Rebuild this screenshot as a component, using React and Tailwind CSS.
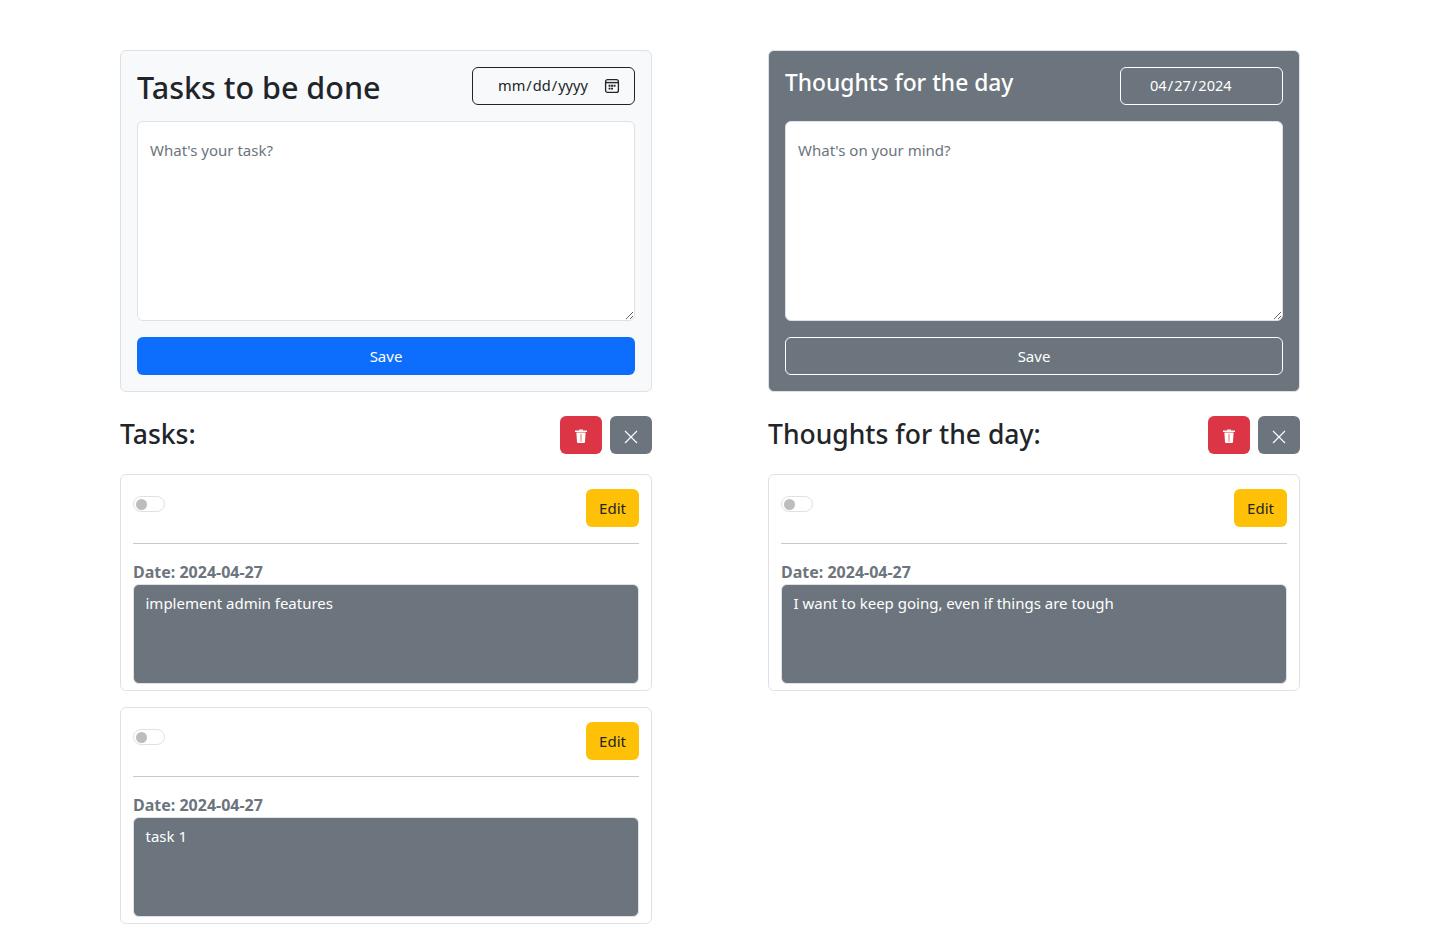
import React from "react";

function TrashIcon() {
  return (
    <svg width="14" height="16" viewBox="0 0 14 16" className="mt-[2px]" aria-hidden="true">
      <path d="M5 1.5 h4 v1.2 h-4 z" fill="#fff" />
      <rect x="1" y="2.4" width="12" height="1.6" rx="0.5" fill="#fff" />
      <path fillRule="evenodd" d="M2.4 4.4 h9.2 l-.6 9.6 a1 1 0 0 1 -1 .9 h-6 a1 1 0 0 1 -1 -.9 z M6 6 v7.2 h2 v-7.2 z" fill="#fff" />
      <rect x="6" y="6" width="2" height="7.2" fill="#f3b7a6" />
    </svg>
  );
}

function CloseIcon() {
  return (
    <svg width="14" height="14" viewBox="0 0 14 14" className="mt-[4px]" aria-hidden="true">
      <path d="M1 1 L13 13 M13 1 L1 13" stroke="#fff" strokeWidth="1.1" fill="none" />
    </svg>
  );
}

function CalendarIcon() {
  return (
    <svg width="16" height="16" viewBox="0 0 16 16" aria-hidden="true">
      <rect x="1.6" y="1.6" width="12.8" height="12.8" rx="2" fill="none" stroke="#212529" strokeWidth="1.3" />
      <path d="M1.6 4.6 H14.4" stroke="#212529" strokeWidth="1.4" />
      <path d="M4.6 6.8h1.9v1.9H4.6zM7.1 6.8H9v1.9H7.1zM9.6 6.8h1.9v1.9H9.6zM4.6 9.7h1.9v1.9H4.6zM7.1 9.7H9v1.9H7.1z" fill="#212529" />
    </svg>
  );
}

function Entry({ text, last }) {
  return (
    <div className={`rounded-md border border-[#dee2e6] bg-white px-3 pb-[6px] pt-[14px] ${last ? "" : "mb-4"}`}>
      <div className="flex items-start justify-between">
        <div className="mt-[7px] flex h-4 w-8 items-center rounded-full border border-[#dfe1e4] pl-[2px]">
          <div className="h-[11px] w-[11px] rounded-full bg-[#bdbdbd]" />
        </div>
        <button className="h-[38px] w-[53px] rounded-md bg-[#ffc107] text-[15px] text-[#212529]">Edit</button>
      </div>
      <hr className="mt-4 border-t border-[#c8c8c8]" />
      <div className="mt-[17px] h-[23px] text-base leading-[22px] font-bold text-[#6c757d]">Date: 2024-04-27</div>
      <div className="h-[100px] rounded-md border border-[#dee2e6] bg-[#6c757d] px-[11.5px] py-[6px] text-[15px] leading-6 text-white">{text}</div>
    </div>
  );
}

function Header({ title }) {
  return (
    <div className="mt-6 mb-5 flex h-[38px] items-center justify-between">
      <h2 className="mt-[-2px] text-[26.5px] leading-[38px] font-medium text-[#212529]">{title}</h2>
      <div className="flex gap-2">
        <button className="flex h-[38px] w-[42px] items-center justify-center rounded-md bg-[#dc3545]"><TrashIcon /></button>
        <button className="flex h-[38px] w-[42px] items-center justify-center rounded-md bg-[#6c757d]"><CloseIcon /></button>
      </div>
    </div>
  );
}

const areaClass = "block h-[200px] w-full rounded-md border border-[#dee2e6] bg-white px-3 py-4 text-[15px] leading-6 text-[#212529] placeholder:text-[#6c757d] outline-none";

export default function App() {
  return (
    <div className="min-h-[944px] bg-white pt-[50px] font-['Noto_Sans','Open_Sans',sans-serif]">
      <div className="mx-[120px] grid w-[1180px] grid-cols-[532px_532px] gap-x-[116px]">
        <div>
          <div className="rounded-md border border-[#dee2e6] bg-[#f8f9fa] p-4">
            <div className="flex h-[54px] items-start justify-between">
              <h1 className="mt-[-1px] text-[30.5px] leading-[42px] font-medium text-[#212529]">Tasks to be done</h1>
              <div className="relative h-[38px] w-[163px]">
                <input type="date" className="h-[38px] w-full rounded-md border border-[#212529] bg-transparent pl-6 pr-3 text-[14.6px] text-[#212529] [&::-webkit-calendar-picker-indicator]:opacity-0" />
                <span className="pointer-events-none absolute right-[15px] top-[11px]"><CalendarIcon /></span>
              </div>
            </div>
            <textarea placeholder="What's your task?" className={areaClass} />
            <button className="mt-4 h-[38px] w-full rounded-md bg-[#0d6efd] text-[15px] text-white">Save</button>
          </div>
          <Header title="Tasks:" />
          <Entry text="implement admin features" />
          <Entry text="task 1" last />
        </div>
        <div>
          <div className="rounded-md border border-[#dee2e6] bg-[#6c757d] p-4">
            <div className="flex h-[54px] items-start justify-between">
              <h1 className="text-[22.8px] leading-8 font-medium text-white">Thoughts for the day</h1>
              <input type="date" defaultValue="2024-04-27" className="h-[38px] w-[163px] rounded-md border border-white bg-transparent pl-7 pr-3 text-[14.6px] text-white [&::-webkit-calendar-picker-indicator]:opacity-0" />
            </div>
            <textarea placeholder="What's on your mind?" className={areaClass} />
            <button className="mt-4 h-[38px] w-full rounded-md border border-white bg-transparent text-[15px] text-white">Save</button>
          </div>
          <Header title="Thoughts for the day:" />
          <Entry text="I want to keep going, even if things are tough" last />
        </div>
      </div>
    </div>
  );
}
